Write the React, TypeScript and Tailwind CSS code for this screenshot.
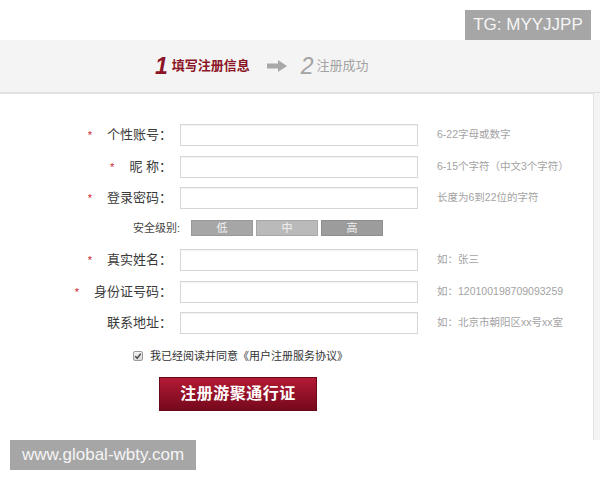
import React from "react";

const cjk = "font-['Liberation_Sans','Noto_Sans_CJK_SC',sans-serif]";

type RowProps = {
  label: string;
  required?: boolean;
  hint: string;
  className?: string;
};

function FieldRow({ label, required, hint, className }: RowProps) {
  return (
    <div className={`flex items-center h-[22px] ${className ?? ""}`}>
      <div className="w-[172px] flex items-center justify-end text-[13px] text-[#3a3a3a]">
        {required && <span className="text-[#d01c2c] text-[11px] mr-[15px] leading-none">*</span>}
        <span className="whitespace-pre">{label}</span>
      </div>
      <div className="ml-[8px] w-[238px] h-[22px] border border-[#d6d6d6] bg-white shadow-[inset_0_1px_1px_rgba(0,0,0,0.05)]" />
      <div className="ml-[19px] w-[128px] overflow-hidden whitespace-nowrap text-[10.5px] text-[#a3a3a3]">
        {hint}
      </div>
    </div>
  );
}

export default function App() {
  return (
    <div className={`relative w-[600px] h-[480px] bg-white overflow-hidden ${cjk}`}>
      <div className="h-10" />

      <div className="h-[400px] bg-[#f4f4f4] flex flex-col">
        {/* steps */}
        <div className="h-[53px] border-b border-[#dedede] flex items-center pl-[155px]">
          <span className="italic font-bold text-[23px] leading-none text-[#8b1426]">1</span>
          <span className="ml-[4px] text-[13px] font-bold text-[#8b1426]">填写注册信息</span>
          <svg className="ml-[17px]" width="20" height="12" viewBox="0 0 20 12">
            <rect x="0" y="3.5" width="12" height="5" fill="#a8a8a8" />
            <polygon points="11,0 20,6 11,12" fill="#a8a8a8" />
          </svg>
          <span className="ml-[14px] italic text-[23px] leading-none text-[#a3a3a3]">2</span>
          <span className="ml-[3px] text-[13px] text-[#a3a3a3]">注册成功</span>
        </div>

        {/* form panel */}
        <div className="flex-1 bg-white border-t border-r border-[#e2e2e2] mr-[6px] pt-[30px]">
          <FieldRow label="个性账号：" required hint="6-22字母或数字" />
          <FieldRow className="mt-[10px]" label="昵 称：" required hint="6-15个字符（中文3个字符）" />
          <FieldRow className="mt-[9px]" label="登录密码：" required hint="长度为6到22位的字符" />

          <div className="mt-[11px] h-[16px] flex items-center">
            <div className="w-[180px] text-right text-[11px] text-[#444]">安全级别:</div>
            <div className="ml-[11px] flex gap-[3px]">
              <div className="w-[62px] h-[16px] bg-[#a6a6a6] border border-[#999] flex items-center justify-center text-[11px] text-[#f2f2f2]">低</div>
              <div className="w-[62px] h-[16px] bg-[#bababa] border border-[#a8a8a8] flex items-center justify-center text-[11px] text-[#f2f2f2]">中</div>
              <div className="w-[62px] h-[16px] bg-[#9c9c9c] border border-[#8e8e8e] flex items-center justify-center text-[11px] text-[#f2f2f2]">高</div>
            </div>
          </div>

          <FieldRow className="mt-[13px]" label="真实姓名：" required hint="如：张三" />
          <FieldRow className="mt-[10px]" label="身份证号码：" required hint="如：120100198709093259" />
          <FieldRow className="mt-[9px]" label="联系地址：" hint="如：北京市朝阳区xx号xx室" />

          <div className="mt-[15px] h-[14px] flex items-center pl-[133px]">
            <span className="w-[10px] h-[10px] border border-[#9a9a9a] rounded-[2px] bg-gradient-to-b from-[#f4f4f4] to-[#d8d8d8] flex items-center justify-center">
              <svg width="8" height="8" viewBox="0 0 8 8">
                <path d="M1.2 4.2 L3.2 6.2 L6.8 1.6" stroke="#444" strokeWidth="1.5" fill="none" />
              </svg>
            </span>
            <span className="ml-[7px] text-[11px] text-[#333]">我已经阅读并同意《用户注册服务协议》</span>
          </div>

          <div className="mt-[14px] pl-[159px]">
            <button className="w-[158px] h-[34px] bg-gradient-to-b from-[#b41a35] to-[#76091c] border border-[#6a0818] text-white text-[16px] font-bold tracking-[0.5px] flex items-center justify-center">
              注册游聚通行证
            </button>
          </div>
        </div>
      </div>

      {/* watermarks */}
      <div className="absolute left-[465px] top-[10px] w-[126px] h-[30px] bg-[#a6a6a6] text-[#f5f5f5] text-[17px] flex items-center justify-center">
        TG: MYYJJPP
      </div>
      <div className="absolute left-[10px] top-[440px] w-[186px] h-[30px] bg-[#a6a6a6] text-[#f5f5f5] text-[17px] flex items-center justify-center">
        www.global-wbty.com
      </div>
    </div>
  );
}
